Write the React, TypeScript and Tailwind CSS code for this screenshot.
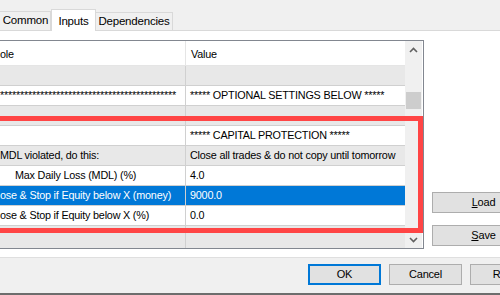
const font = { fontFamily: '"Liberation Sans", Arial, sans-serif' }

type Row = { name: string; value: string; pad?: boolean; gray?: boolean; selected?: boolean }

const rows: Row[] = [
  { name: '', value: '', gray: true },
  { name: '*'.repeat(44), value: '***** OPTIONAL SETTINGS BELOW *****' },
  { name: '', value: '', gray: true },
  { name: '', value: '***** CAPITAL PROTECTION *****' },
  { name: 'MDL violated, do this:', value: 'Close all trades & do not copy until tomorrow', gray: true },
  { name: 'Max Daily Loss (MDL) (%)', value: '4.0', pad: true },
  { name: 'ose & Stop if Equity below X (money)', value: '9000.0', selected: true },
  { name: 'ose & Stop if Equity below X (%)', value: '0.0' },
]

function Btn({ children, focused, className = '' }: { children: React.ReactNode; focused?: boolean; className?: string }) {
  return (
    <div
      className={`h-[21px] shrink-0 flex items-center justify-center bg-[#e1e1e1] text-[11px] text-black ${
        focused ? 'border-2 border-[#0078d7]' : 'border border-[#adadad]'
      } ${className}`}
    >
      {children}
    </div>
  )
}

export default function App() {
  return (
    <div
      className="w-[500px] h-[295px] overflow-hidden bg-[#f0f0f0] flex flex-col text-[10.8px] tracking-[-0.2px] text-black"
      style={font}
    >
      {/* tabs */}
      <div className="h-[31px] flex items-end border-b border-[#d9d9d9]">
        <div className="h-[19px] w-[51px] border border-b-0 border-l-0 border-[#d9d9d9] flex items-center justify-center pl-[1px] text-[11.5px]">Common</div>
        <div className="h-[22px] w-[45px] -mb-px bg-white border border-b-0 border-[#d9d9d9] flex items-start justify-center pt-[3px] text-[11.5px]">Inputs</div>
        <div className="h-[18px] w-[77px] border border-b-0 border-l-0 border-[#d9d9d9] flex items-center justify-center text-[11.5px]">Dependencies</div>
      </div>

      {/* page */}
      <div className="bg-white h-[226px] flex pt-[9px] relative">
        <div className="w-[424px] h-[209px] shrink-0 border border-l-0 border-[#828790] flex">
          <div className="w-[405px] flex flex-col">
            <div className="h-[25px] flex border-b border-[#e5e5e5]">
              <div className="w-[186px] border-r border-[#e5e5e5] flex items-center pt-[2px]">ole</div>
              <div className="flex-1 flex items-center pl-[5px] pt-[2px]">Value</div>
            </div>
            {rows.map((r, i) => (
              <div
                key={i}
                className={`h-[20px] flex border-b border-[#d0d0d0] ${
                  r.selected ? 'bg-[#0078d7] text-white' : r.gray ? 'bg-[#e8e8e8]' : 'bg-white'
                }`}
              >
                <div className={`w-[186px] shrink-0 border-r border-[#d0d0d0] flex items-center overflow-hidden whitespace-nowrap ${r.pad ? 'pl-[15px]' : ''}`}>
                  {r.name}
                </div>
                <div className="flex-1 flex items-center pl-[4px] whitespace-nowrap overflow-hidden">{r.value}</div>
              </div>
            ))}
            <div className="flex-1 flex bg-[#e8e8e8]">
              <div className="w-[186px] border-r border-[#d0d0d0]" />
            </div>
          </div>
          {/* scrollbar */}
          <div className="w-[17px] bg-[#f0f0f0] flex flex-col items-center">
            <div className="h-[17px] flex items-center justify-center">
              <svg width="9" height="6" viewBox="0 0 9 6"><path d="M1 5 L4.5 1.5 L8 5" stroke="#606060" strokeWidth="1.6" fill="none" /></svg>
            </div>
            <div className="mt-[34px] h-[17px] w-[15px] bg-[#cdcdcd]" />
            <div className="flex-1" />
            <div className="h-[17px] flex items-center justify-center">
              <svg width="9" height="6" viewBox="0 0 9 6"><path d="M1 1 L4.5 4.5 L8 1" stroke="#606060" strokeWidth="1.6" fill="none" /></svg>
            </div>
          </div>
        </div>

        {/* side buttons */}
        <div className="shrink-0 flex flex-col gap-[12px] pt-[152px] pl-[8px]">
          <Btn className="w-[102px] pl-[1px]">
            <span><span className="underline">L</span>oad</span>
          </Btn>
          <Btn className="w-[102px] pl-[1px]">
            <span><span className="underline">S</span>ave</span>
          </Btn>
        </div>

        {/* annotation */}
        <div className="absolute left-[-10px] top-[85px] w-[433px] h-[117px] border-[5px] border-[#ff4545]" />
      </div>

      {/* bottom bar */}
      <div className="flex-1 border-t border-[#dfdfdf] flex flex-col">
        <div className="flex gap-[8px] pl-[308px] pt-[6px]">
          <Btn focused className="w-[73px] h-[20px]">OK</Btn>
          <Btn className="w-[73px] h-[20px]">Cancel</Btn>
          <Btn className="w-[73px] h-[20px]">Reset</Btn>
        </div>
        <div className="flex-1" />
        <div className="h-[2px] bg-[#6d6d6d]" />
      </div>
    </div>
  )
}
